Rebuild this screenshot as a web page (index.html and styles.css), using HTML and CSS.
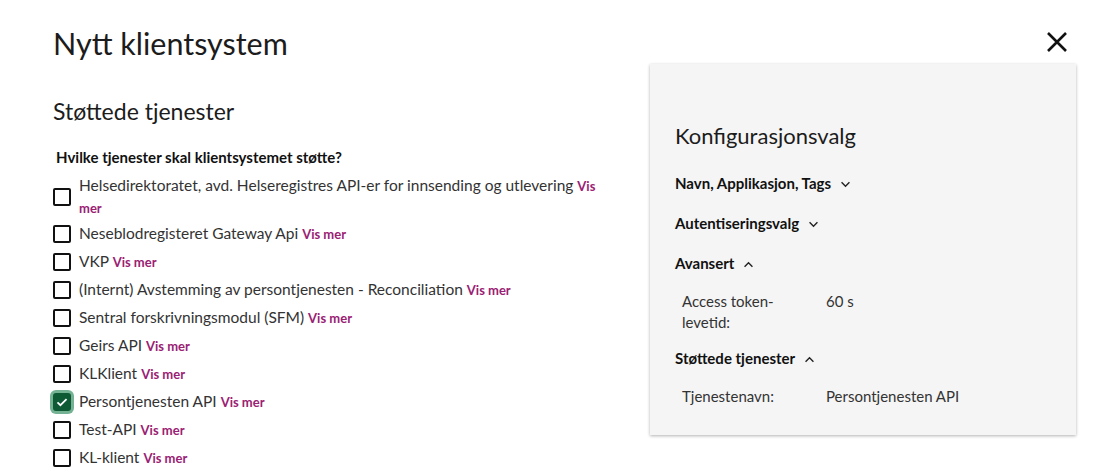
FILE: index.html
```html
<!DOCTYPE html>
<html lang="no">
<head>
<meta charset="utf-8">
<title>Nytt klientsystem</title>
<link rel="stylesheet" href="styles.css">
</head>
<body>
<div class="page">
  <div class="main">
    <h1 class="title">Nytt klientsystem</h1>
    <h2 class="section-title">Støttede tjenester</h2>
    <fieldset class="services">
      <legend class="legend">Hvilke tjenester skal klientsystemet støtte?</legend>
      <label class="option first"><span class="box"></span><span class="label-text">Helsedirektoratet, avd. Helseregistres API-er for innsending og utlevering <a class="more">Vis mer</a></span></label>
      <label class="option"><span class="box"></span><span class="label-text">Neseblodregisteret Gateway Api <a class="more">Vis mer</a></span></label>
      <label class="option"><span class="box"></span><span class="label-text">VKP <a class="more">Vis mer</a></span></label>
      <label class="option"><span class="box"></span><span class="label-text">(Internt) Avstemming av persontjenesten - Reconciliation <a class="more">Vis mer</a></span></label>
      <label class="option"><span class="box"></span><span class="label-text">Sentral forskrivningsmodul (SFM) <a class="more">Vis mer</a></span></label>
      <label class="option"><span class="box"></span><span class="label-text">Geirs API <a class="more">Vis mer</a></span></label>
      <label class="option"><span class="box"></span><span class="label-text">KLKlient <a class="more">Vis mer</a></span></label>
      <label class="option"><span class="box checked"><svg viewBox="0 0 16 16" width="14" height="14"><path d="M2.8 8.3l3.4 3.3L13.2 4.6" fill="none" stroke="#fff" stroke-width="2"/></svg></span><span class="label-text">Persontjenesten API <a class="more">Vis mer</a></span></label>
      <label class="option"><span class="box"></span><span class="label-text">Test-API <a class="more">Vis mer</a></span></label>
      <label class="option"><span class="box"></span><span class="label-text">KL-klient <a class="more">Vis mer</a></span></label>
    </fieldset>
  </div>
  <aside class="side">
    <button class="close" aria-label="Lukk"><svg viewBox="0 0 24 24" width="24" height="24"><path d="M3 3L21 21M21 3L3 21" stroke="#111" stroke-width="2.6" fill="none"/></svg></button>
    <div class="panel">
      <h2 class="panel-title">Konfigurasjonsvalg</h2>
      <div class="group">
        <div class="group-head">Navn, Applikasjon, Tags <svg class="chev" viewBox="0 0 12 8" width="11" height="7"><path d="M1.5 1.5L6 6l4.5-4.5" fill="none" stroke="#222" stroke-width="1.6"/></svg></div>
      </div>
      <div class="group">
        <div class="group-head">Autentiseringsvalg <svg class="chev" viewBox="0 0 12 8" width="11" height="7"><path d="M1.5 1.5L6 6l4.5-4.5" fill="none" stroke="#222" stroke-width="1.6"/></svg></div>
      </div>
      <div class="group">
        <div class="group-head">Avansert <svg class="chev" viewBox="0 0 12 8" width="11" height="7"><path d="M1.5 6.5L6 2l4.5 4.5" fill="none" stroke="#222" stroke-width="1.6"/></svg></div>
        <dl class="props">
          <dt>Access token-levetid:</dt><dd>60 s</dd>
        </dl>
      </div>
      <div class="group">
        <div class="group-head">Støttede tjenester <svg class="chev" viewBox="0 0 12 8" width="11" height="7"><path d="M1.5 6.5L6 2l4.5 4.5" fill="none" stroke="#222" stroke-width="1.6"/></svg></div>
        <dl class="props">
          <dt>Tjenestenavn:</dt><dd>Persontjenesten API</dd>
        </dl>
      </div>
    </div>
  </aside>
</div>
</body>
</html>
```

FILE: styles.css
```css
* { box-sizing: border-box; }
html, body { margin: 0; padding: 0; background: #fff; }
body {
  font-family: "Lato", "Liberation Sans", sans-serif;
  color: #222;
  width: 1099px;
  height: 475px;
  overflow: hidden;
}
.page {
  display: flex;
  padding-left: 53px;
}
.main {
  width: 548px;
  padding-top: 24px;
}
.title {
  margin: 0;
  font-size: 30.5px;
  font-weight: 400;
  line-height: 38px;
  color: #1c1c1c;
}
.section-title {
  margin: 35px 0 0;
  font-size: 23px;
  font-weight: 400;
  line-height: 28px;
  color: #1c1c1c;
}
.services {
  border: 0;
  margin: 22px 0 0;
  padding: 0;
}
.legend {
  padding: 0 0 0 3px;
  font-size: 15px;
  font-weight: 700;
  line-height: 20px;
  margin-bottom: 3px;
  color: #111;
}
.option {
  display: flex;
  align-items: center;
  gap: 8px;
  min-height: 28px;
  padding: 3px 0;
}
.option.first {
  padding: 5px 0 1px;
}
.box {
  flex: none;
  width: 18px;
  height: 18px;
  border: 2px solid #111;
  border-radius: 2px;
  display: flex;
  align-items: center;
  justify-content: center;
}
.box.checked {
  background: #0e5a35;
  border-color: #0e5a35;
  border-radius: 3px;
  box-shadow: 0 0 0 3px #74b293;
}
.label-text {
  font-size: 15.5px;
  line-height: 21px;
  color: #333;
}
.more {
  font-size: 13px;
  font-weight: 700;
  color: #9a2173;
}
.side {
  margin-left: 49px;
  width: 426px;
  display: flex;
  flex-direction: column;
  align-items: flex-end;
}
.close {
  border: 0;
  background: none;
  padding: 0;
  margin: 30px 7px 0 0;
  width: 24px;
  height: 24px;
  display: flex;
}
.panel {
  margin-top: 10px;
  width: 426px;
  height: 371px;
  background: #f5f5f5;
  box-shadow: 0 1px 3px rgba(0,0,0,0.3);
  padding: 58px 25px 0 25px;
  align-self: stretch;
}
.panel-title {
  margin: 0 0 13px;
  font-size: 22px;
  font-weight: 400;
  line-height: 28px;
  color: #1c1c1c;
}
.group-head {
  display: flex;
  align-items: center;
  gap: 9px;
  font-size: 15px;
  font-weight: 700;
  line-height: 20px;
  color: #111;
  height: 40px;
}
.group-head .chev { margin-top: 2px; }
.props {
  display: grid;
  grid-template-columns: 144px 1fr;
  margin: 0 0 5px;
  padding: 8px 0 0 7px;
  font-size: 15px;
  line-height: 21px;
  color: #333;
}
.props dt { width: 110px; }
.props dd { margin: 0; }
```
